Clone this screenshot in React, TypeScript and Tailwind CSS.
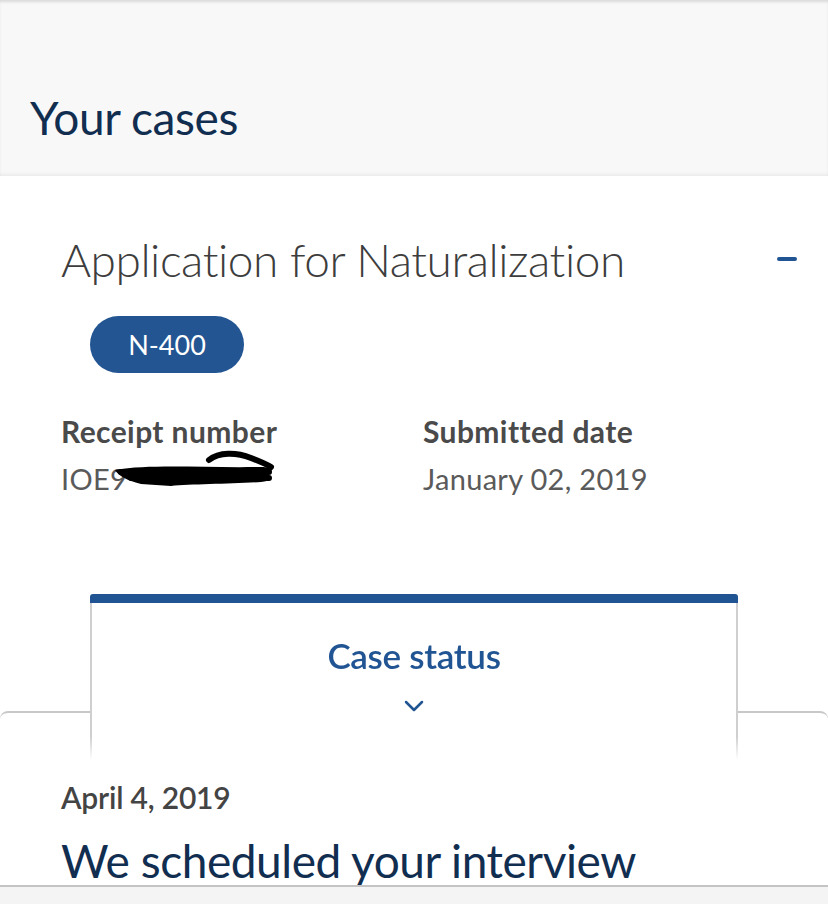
import React from "react";

export default function App() {
  return (
    <div
      className="relative w-[828px] h-[904px] overflow-hidden bg-white flex flex-col"
      style={{ fontFamily: "'Source Sans Pro', Lato, 'Liberation Sans', sans-serif" }}
    >
      {/* Header */}
      <div className="h-[176px] shrink-0 bg-[#f8f8f8] shadow-[inset_0_3px_3px_-1px_rgba(0,0,0,0.12),inset_0_-4px_4px_-3px_rgba(0,0,0,0.08)] flex items-end pl-[30px] pb-[35px]">
        <h1 className="text-[46px] leading-none text-[#112e51] tracking-[-0.4px]">Your cases</h1>
      </div>

      {/* Case card */}
      <div className="flex flex-col px-[61px] pt-[61px]">
        <div className="flex items-start justify-between">
          <h2 className="text-[46px] leading-none font-light text-[#3d3d3d] tracking-[-0.45px]">
            Application for Naturalization
          </h2>
          <div className="mt-[20px] mr-[-30px] w-[20px] h-[4px] rounded-[2px] bg-[#205493]" />
        </div>

        <div className="mt-[33px] ml-[29px] w-[154px] h-[57px] rounded-full bg-[#235592] flex items-center justify-center">
          <span className="text-[27px] text-white leading-none">N-400</span>
        </div>

        <div className="mt-[43px] grid grid-cols-[362px_1fr]">
          <div className="flex flex-col">
            <span className="text-[30px] font-bold leading-none text-[#4a4a4a] tracking-[0.4px]">Receipt number</span>
            <div className="relative mt-[18px] h-[30px]">
              <span className="text-[29px] leading-none text-[#5a5a5a] tracking-[0.3px]">IOE9</span>
              <svg className="absolute left-[50px] top-[-14px]" width="165" height="44" viewBox="0 0 165 44">
                <path
                  d="M4 20 C40 14 90 18 150 17 C158 17 162 19 160 22 C150 25 120 24 90 26 L150 27 C160 28 160 31 150 32 C120 34 80 34 60 36 L30 34 C15 30 8 26 4 20 Z"
                  fill="#000"
                />
                <path d="M98 10 C108 2 125 2 140 8 C148 11 155 14 160 17" stroke="#000" strokeWidth="6" fill="none" strokeLinecap="round" />
                <path d="M10 22 L158 22 M20 28 L158 28" stroke="#000" strokeWidth="6" strokeLinecap="round" />
              </svg>
            </div>
          </div>
          <div className="flex flex-col">
            <span className="text-[30px] font-bold leading-none text-[#4a4a4a] tracking-[0.4px]">Submitted date</span>
            <span className="mt-[18px] text-[29px] leading-none text-[#5a5a5a] tracking-[0.3px]">January 02, 2019</span>
          </div>
        </div>
      </div>

      {/* Case status box */}
      <div className="relative z-10 mt-[100px] mx-[90px] w-[648px] h-[166px] -mb-[49px] bg-white flex flex-col">
        <div className="h-[9px] rounded-t-[3px] bg-[#205493]" />
        <div className="flex-1 border-x-2 border-[#cfcfcf] flex flex-col items-center pt-[35px] [mask-image:linear-gradient(to_bottom,black_85%,transparent)]">
          <span className="text-[35px] font-semibold leading-none text-[#205493] tracking-[-0.3px]">Case status</span>
          <svg className="mt-[26px]" width="22" height="14" viewBox="0 0 22 14">
            <path d="M3 3 L11 11 L19 3" stroke="#205493" strokeWidth="2.5" fill="none" strokeLinecap="round" strokeLinejoin="round" />
          </svg>
        </div>
      </div>

      {/* Timeline card */}
      <div className="flex-1 rounded-t-[8px] border-t-2 border-[#c8c8c8] bg-white px-[61px] pt-[69px] flex flex-col">
        <span className="text-[30px] font-semibold leading-none text-[#444] tracking-[-0.2px]">April 4, 2019</span>
        <span className="mt-[26px] text-[46px] leading-none text-[#112e51] tracking-[-0.45px]">We scheduled your interview</span>
      </div>

      {/* Bottom bar */}
      <div className="absolute left-0 right-0 bottom-0 h-[19px] border-t-2 border-[#c4c4c4] bg-[#f4f4f4] z-20" />
    </div>
  );
}
